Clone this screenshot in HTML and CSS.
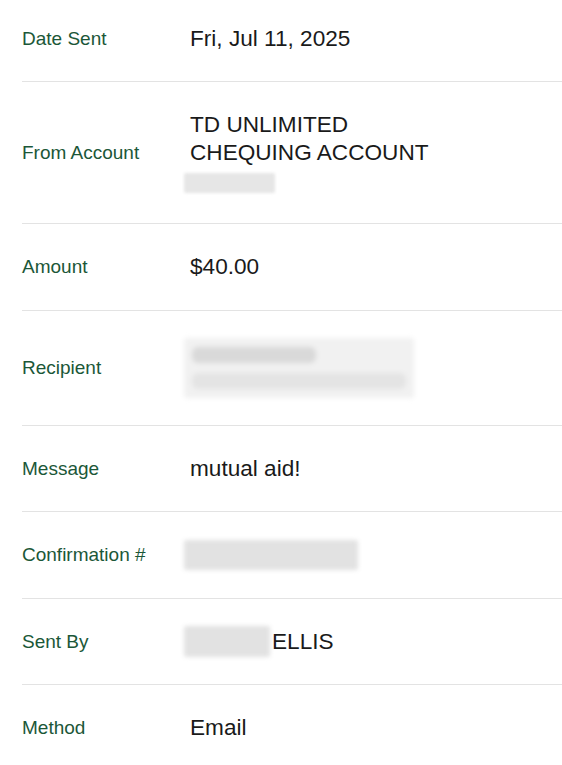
FILE: index.html
```html
<!DOCTYPE html>
<html lang="en">
<head>
    <meta charset="UTF-8">
    <meta name="viewport" content="width=device-width, initial-scale=1.0">
    <title>Transfer Details</title>
    <link rel="stylesheet" href="styles.css">
</head>
<body>
    <div class="details">
        <div class="row first">
            <div class="label">Date Sent</div>
            <div class="value">Fri, Jul 11, 2025</div>
        </div>

        <div class="row">
            <div class="label">From Account</div>
            <div class="value">
                <div>TD UNLIMITED</div>
                <div>CHEQUING ACCOUNT</div>
                <div class="redacted acct"></div>
            </div>
        </div>

        <div class="row">
            <div class="label">Amount</div>
            <div class="value">$40.00</div>
        </div>

        <div class="row">
            <div class="label">Recipient</div>
            <div class="value">
                <div class="redacted recipient">
                    <span class="blob name"></span>
                    <span class="blob email"></span>
                </div>
            </div>
        </div>

        <div class="row">
            <div class="label">Message</div>
            <div class="value">mutual aid!</div>
        </div>

        <div class="row">
            <div class="label">Confirmation #</div>
            <div class="value">
                <div class="redacted confirm"></div>
            </div>
        </div>

        <div class="row">
            <div class="label">Sent By</div>
            <div class="value inline">
                <span class="redacted first-name"></span>ELLIS
            </div>
        </div>

        <div class="row last">
            <div class="label">Method</div>
            <div class="value">Email</div>
        </div>
    </div>
</body>
</html>
```

FILE: styles.css
```css
* {
    margin: 0;
    padding: 0;
    box-sizing: border-box;
}

body {
    font-family: 'Liberation Sans', Arial, sans-serif;
    background: #ffffff;
    overflow: hidden;
}

.details {
    padding-left: 22px;
}

.row {
    display: flex;
    align-items: center;
    padding: 29px 0 28.5px;
    border-bottom: 1px solid #e3e3e3;
}

.row.first {
    padding-top: 25px;
    padding-bottom: 28px;
}

.row.last {
    border-bottom: none;
}

.label {
    width: 168px;
    flex-shrink: 0;
    font-size: 19px;
    color: #1b5738;
    line-height: 28px;
}

.value {
    font-size: 22.6px;
    color: #1a1a1a;
    line-height: 28px;
}

.value.inline {
    display: flex;
    align-items: center;
    height: 28px;
}

/* blurred-out personal info */
.redacted {
    background: #eeeeee;
    border-radius: 2px;
    margin-left: -6px;
}

.redacted.acct {
    width: 91px;
    height: 20px;
    margin-top: 6px;
    margin-bottom: 1.5px;
    background: #e6e6e6;
    filter: blur(1.5px);
}

.redacted.recipient {
    width: 230px;
    height: 60px;
    margin-top: -2px;
    margin-bottom: -1.5px;
    background: #f1f1f1;
    display: flex;
    flex-direction: column;
    justify-content: center;
    gap: 10px;
    padding: 0 8px;
    filter: blur(2.5px);
}

.blob {
    display: block;
    height: 16px;
    border-radius: 6px;
}

.blob.name {
    width: 124px;
    background: #d9d9d9;
}

.blob.email {
    width: 214px;
    background: #e4e4e4;
}

.redacted.confirm {
    width: 174px;
    height: 30px;
    margin-top: -1px;
    margin-bottom: -1px;
    background: #e2e2e2;
    filter: blur(2px);
}

.redacted.first-name {
    display: inline-block;
    width: 86px;
    height: 31px;
    margin-right: 2px;
    background: #e2e2e2;
    filter: blur(2px);
}
```
